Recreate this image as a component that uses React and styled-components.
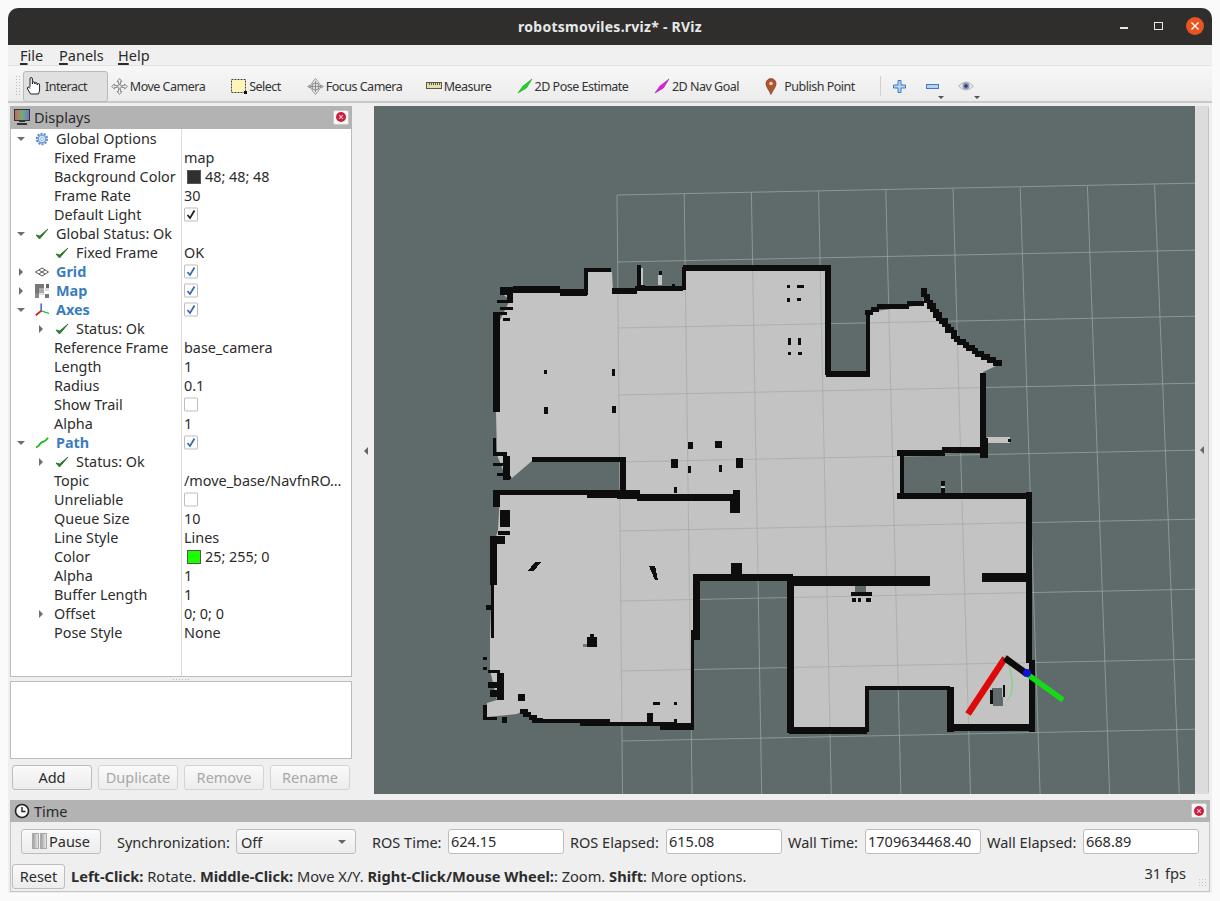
import React from 'react';
import styled, { createGlobalStyle } from 'styled-components';

const Global = createGlobalStyle`
  html, body { margin: 0; padding: 0; background: #fafafa; }
  body { font-family: "Noto Sans", "Open Sans", sans-serif; font-size: 14.4px; color: #2c2c2c; }
  #root { width: 1220px; height: 901px; overflow: hidden; }
`;

const Page = styled.div`
  width: 1220px; height: 901px; padding: 8px 8px 0; box-sizing: border-box; background: #fafafa;
`;
const Win = styled.div`
  width: 1204px; height: 885px; background: #efefef; border-radius: 10px 10px 0 0; overflow: hidden;
  display: flex; flex-direction: column;
`;
const TitleBar = styled.div`
  height: 37px; flex: none; background: #2f2e2d; position: relative; display: flex; align-items: center; justify-content: center;
  color: #e8e8e8; font-weight: 700; font-size: 14px; letter-spacing: .25px; padding-bottom: 1px; box-sizing: border-box;
`;
const WinBtns = styled.div`
  position: absolute; right: 0; top: 0; height: 37px; width: 100px;
`;
const MinIcon = styled.span`
  position: absolute; left: 8px; top: 19px; width: 8px; height: 1.5px; background: #e8e8e8;
`;
const MaxIcon = styled.span`
  position: absolute; left: 42px; top: 14px; width: 7px; height: 6px; border: 1px solid #e8e8e8;
`;
const CloseIcon = styled.span`
  position: absolute; left: 74px; top: 9px; width: 18px; height: 18px; border-radius: 50%; background: #e95420;
  display: flex; align-items: center; justify-content: center;
`;
const MenuBar = styled.div`
  height: 21px; flex: none; display: flex; align-items: center; padding: 0 0 0 12px; font-size: 14.5px; color: #2a2a2a;
  background: #f0f0f0; border-bottom: 1px solid #e2e2e2; box-sizing: border-box;
`;
const MenuItem = styled.span`
  width: ${p => p.$w}px; u { text-decoration-thickness: 1.5px; text-underline-offset: 2px; }
`;
const ToolBar = styled.div`
  height: 37px; flex: none; display: flex; align-items: center; padding: 5px 0 0 7px; box-sizing: border-box;
  background: linear-gradient(#f7f7f7, #ececec); border-bottom: 2px solid #c8c8c8; font-size: 12.5px; letter-spacing: -.5px; color: #333;
`;
const Grip = styled.span`
  width: 6px; height: 22px; margin-right: 2px; flex: none;
  background-image: radial-gradient(#bdbdbd 0.7px, transparent 0.8px); background-size: 3px 3px;
`;
const ToolBtn = styled.div`
  width: ${p => p.$w}px; height: 31px; flex: none; display: flex; align-items: center; justify-content: ${p => p.$left ? 'flex-start' : 'center'}; gap: 2px;
  box-sizing: border-box; white-space: nowrap; border-radius: 3px;
  ${p => p.$active && 'background: #e0e0e0; border: 1px solid #b9b9b9; padding-left: 1px;'}
`;
const PinGap = styled.span` width: 3px; flex: none; `;
const ToolSep = styled.span`
  width: 1px; height: 20px; background: #d0d0d0; flex: none; margin: 0 2px 0 20px;
`;
const IconSlot = styled.div`
  width: 33px; height: 31px; flex: none; display: flex; align-items: center; justify-content: center; position: relative;
`;
const Drop = styled.span`
  position: absolute; right: ${p => p.$r}px; bottom: 3px; width: 0; height: 0; border: 3px solid transparent; border-top: 3px solid #555; border-bottom: 0;
`;
const Main = styled.div`
  height: 693px; flex: none; display: flex; padding: 3px 2px 0 2px; box-sizing: border-box;
`;
const Dock = styled.div`
  width: 342px; flex: none; display: flex; flex-direction: column;
`;
const DockTitle = styled.div`
  height: 23px; flex: none; background: #b3b3b3; display: flex; align-items: center; gap: 4px; padding: 0 3px 1px 4px; font-size: 14.5px; color: #2a2a2a; box-sizing: border-box;
`;
const Spacer = styled.span` flex: 1; `;
const XBtn = styled.span`
  width: 16px; height: 15px; background: #f7f7f7; border-radius: 2px; border: 1px solid #c9c9c9; box-sizing: border-box; display: flex; align-items: center; justify-content: center;
`;
const Tree = styled.div`
  height: 548px; flex: none; background: #fff; border: 1px solid #bcbcbc; border-top: 0; box-sizing: border-box; position: relative;
`;
const ColLine = styled.span`
  position: absolute; left: 170px; top: 0; bottom: 0; width: 1px; background: #dcdcdc;
`;
const Row = styled.div`
  height: 19px; display: flex; align-items: center; position: relative;
`;
const NameCell = styled.div`
  width: 171px; flex: none; height: 19px; display: flex; align-items: center; padding-left: ${p => p.$pad}px; box-sizing: border-box;
  white-space: nowrap; font-weight: ${p => p.$strong ? 700 : 400}; color: ${p => p.$strong ? '#3a7dbf' : '#2c2c2c'};
`;
const ValueCell = styled.div`
  flex: 1; min-width: 0; padding-left: 2px; display: flex; align-items: center; white-space: nowrap; color: #2c2c2c; gap: 4px;
`;
const Arrow = styled.span`
  position: absolute; left: ${p => p.$x}px; top: ${p => p.$open ? 8 : 6}px; width: 0; height: 0; border-style: solid;
  ${p => p.$open
    ? 'border-width: 4px 4px 0 4px; border-color: #6e6e6e transparent transparent transparent;'
    : 'border-width: 4px 0 4px 4px; border-color: transparent transparent transparent #6e6e6e;'}
`;
const RowIcon = styled.span`
  width: 14px; height: 14px; display: inline-flex; margin-right: ${p => p.$gap}px; flex: none; align-items: center; justify-content: center;
`;
const Swatch = styled.span`
  width: 12px; height: 12px; background: ${p => p.$c}; border: 1px solid #555; margin-left: 3px; flex: none;
`;
const Check = styled.span`
  width: 12px; height: 12px; background: #fff; border: 1px solid #bdbdbd; border-radius: 1px; display: inline-flex; align-items: center; justify-content: center; flex: none;
  transform: translateY(-0.5px);
`;
const Splitter = styled.div`
  height: 4px; flex: none; display: flex; align-items: center; justify-content: center;
`;
const SplitDots = styled.span`
  width: 18px; height: 1px; background-image: radial-gradient(#b8b8b8 .6px, transparent .7px); background-size: 3px 1px;
`;
const Desc = styled.div`
  height: 78px; flex: none; background: #fff; border: 1px solid #bcbcbc; box-sizing: border-box;
`;
const DockBtns = styled.div`
  height: 25px; flex: none; margin-top: 6px; padding-left: 2px; display: flex; gap: 6px;
`;
const Btn = styled.div`
  width: ${p => p.$w}px; height: 25px; flex: none; box-sizing: border-box; display: flex; align-items: center; justify-content: center; gap: ${p => p.$gap || 0}px;
  border-radius: 3px; border: 1px solid ${p => p.$off ? '#d4d4d4' : '#bdbdbd'}; background: linear-gradient(#fafafa, #ececec); padding-bottom: 1px;
  color: ${p => p.$off ? '#a8a8a8' : '#2c2c2c'}; font-size: 14.5px;
`;
const HSplit = styled.div`
  width: 22px; flex: none; display: flex; align-items: center; justify-content: flex-end; padding-right: 6px; box-sizing: border-box;
`;
const SideArrow = styled.span`
  width: 0; height: 0; border-style: solid; border-width: 4px 4px 4px 0; border-color: transparent #666 transparent transparent;
`;
const Viewport = styled.div`
  width: 821px; height: 688px; flex: none; background: #5e6b6a; overflow: hidden;
  svg { display: block; }
`;
const SideStrip = styled.div`
  width: 14px; height: 688px; flex: none; background: #dcdcdc; border-right: 1px solid #c4c4c4; box-sizing: border-box;
  display: flex; align-items: center; justify-content: center; border-radius: 2px;
`;
const Dots = styled.div`
  height: 4px; flex: none;
`;
const TimePanel = styled.div`
  margin: 0 2px; width: 1200px; height: 92px; flex: none; border: 1px solid #c4c4c4; border-top: 0; box-sizing: border-box;
  display: flex; flex-direction: column; position: relative;
`;
const TimeTitle = styled.div`
  height: 22px; flex: none; background: #b3b3b3; display: flex; align-items: center; gap: 4px; padding: 0 3px 1px 4px; font-size: 14.5px; color: #2a2a2a; margin: 0 -1px; box-sizing: border-box;
`;
const TimeRow = styled.div`
  height: 25px; margin-top: 7px; flex: none; display: flex; align-items: center; padding-left: 10px;
`;
const Lbl = styled.span`
  width: ${p => p.$w}px; flex: none; padding-left: ${p => p.$pad}px; box-sizing: border-box; white-space: nowrap; font-size: 14.5px; color: #2c2c2c;
`;
const Input = styled.div`
  width: 116px; height: 25px; flex: none; background: #fff; border: 1px solid #bdbdbd; border-radius: 3px; box-sizing: border-box; padding-left: 2px; line-height: 22px; font-size: 14.5px; color: #2c2c2c;
`;
const Combo = styled.div`
  width: 120px; height: 25px; flex: none; background: linear-gradient(#fafafa, #ececec); border: 1px solid #bdbdbd; border-radius: 3px; box-sizing: border-box; padding: 0 9px 0 4px; display: flex; align-items: center; justify-content: space-between; font-size: 14.5px;
`;
const ComboArrow = styled.span`
  width: 0; height: 0; border: 4px solid transparent; border-top: 4px solid #666; border-bottom: 0;
`;
const StatusRow = styled.div`
  height: 25px; margin-top: 10px; flex: none; display: flex; align-items: center; padding-left: 1px; font-size: 14.63px; position: relative;
  b { font-weight: 700; }
`;
const StatusText = styled.span` margin: 0 0 2px 6px; white-space: nowrap; `;
const Fps = styled.span`
  position: absolute; right: 23px; top: 0; line-height: 18px;
`;
const ResizeGrip = styled.span`
  position: absolute; right: 1px; bottom: 1px; width: 10px; height: 10px;
  background-image: radial-gradient(#c4c4c4 .7px, transparent .8px); background-size: 3px 3px;
`;

const CheckMark = ({ c }) => (
  <svg width="12" height="12" viewBox="0 0 12 12"><path d="M2.5 6.5 L5 9.5 L9.5 2" fill="none" stroke={c} strokeWidth="1.8" /></svg>
);
const GreenCheck = () => (
  <svg width="14" height="14" viewBox="0 0 14 14"><path d="M1 8 L4.5 12 L13 2 L4.8 9 Z" fill="#2d7a2d" stroke="#2d7a2d" strokeWidth="1" strokeLinejoin="round" /></svg>
);
const RedX = () => (
  <svg width="12" height="12" viewBox="0 0 12 12"><circle cx="6" cy="6" r="5" fill="#c8203c" /><path d="M4.2 4.2 L7.8 7.8 M7.8 4.2 L4.2 7.8" stroke="#f3c4cc" strokeWidth="1.2" /></svg>
);
const Gear = () => (
  <svg width="14" height="14" viewBox="0 0 14 14"><circle cx="7" cy="7" r="5.2" fill="#c9d9ef" stroke="#5f8fcb" strokeWidth="2" strokeDasharray="2 1.2" /><circle cx="7" cy="7" r="3.8" fill="#dbe6f5" stroke="#5f8fcb" strokeWidth=".9" /><circle cx="7" cy="7" r="1.5" fill="#fff" stroke="#5f8fcb" strokeWidth=".6" /></svg>
);
const GridIcon = () => (
  <svg width="14" height="10" viewBox="0 0 14 10"><path d="M7 1 L13.5 5 L7 9 L.5 5 Z M4 3 L10 7 M10 3 L4 7" fill="none" stroke="#555" strokeWidth="1" /></svg>
);
const MapIcon = () => (
  <svg width="16" height="16" viewBox="0 0 16 16" shapeRendering="crispEdges">
    <rect width="16" height="16" fill="#fff" />
    {[[0,0,10,5,'#777'],[0,5,5,5,'#777'],[5,5,5,5,'#aaa'],[13,0,3,5,'#666'],[0,10,5,6,'#888'],[5,10,5,3,'#ddd'],[11,11,5,5,'#777'],[11,5,5,3,'#ddd']].map(([x,y,w,h,f],i)=><rect key={i} x={x} y={y} width={w} height={h} fill={f} />)}
  </svg>
);
const AxesIcon = () => (
  <svg width="16" height="16" viewBox="0 0 16 16"><path d="M7 9 L7 0.5" stroke="#2233cc" strokeWidth="1.4" /><path d="M7 9 L16 12" stroke="#22bb33" strokeWidth="1.4" /><path d="M7 9 L1 14" stroke="#d11818" strokeWidth="2" /></svg>
);
const PathIcon = () => (
  <svg width="16" height="14" viewBox="0 0 16 14"><path d="M1 12 C5 12 5 7 8 6 S11 6 15 1" fill="none" stroke="#1fb81f" strokeWidth="2.2" /></svg>
);
const Monitor = () => (
  <svg width="16" height="16" viewBox="0 0 16 16" shapeRendering="crispEdges">
    <defs><linearGradient id="scr" x1="0" x2="1"><stop offset="0" stopColor="#d06060" /><stop offset=".5" stopColor="#70b070" /><stop offset="1" stopColor="#7070d0" /></linearGradient></defs>
    <rect x=".5" y=".5" width="15" height="11" fill="url(#scr)" stroke="#333" /><rect x="5" y="12" width="6" height="1" fill="#333" /><rect x="3" y="14" width="10" height="1.5" fill="#333" />
  </svg>
);
const Clock = () => (
  <svg width="16" height="16" viewBox="0 0 16 16"><circle cx="8" cy="8" r="6.5" fill="#fafafa" stroke="#222" strokeWidth="1.6" /><path d="M8 4 V8.5 H11.5" fill="none" stroke="#222" strokeWidth="1.4" /></svg>
);
const Hand = () => (
  <svg width="18" height="20" viewBox="0 0 18 20"><path d="M5 11 V3 Q5 1.5 6.2 1.5 Q7.4 1.5 7.4 3 V8 V7 Q7.4 5.8 8.6 5.8 Q9.8 5.8 9.8 7 V8 Q9.8 6.6 11 6.6 Q12.2 6.6 12.2 8 V9 Q12.2 7.6 13.4 7.6 Q14.6 7.6 14.6 9 V13 Q14.6 16 13.4 18 H5.6 L2.5 13 Q2 11.5 3 11 Q4 10.6 5 12.5" fill="#fff" stroke="#222" strokeWidth="1" /></svg>
);
const MoveIcon = () => (
  <svg width="17" height="17" viewBox="0 0 17 17"><g fill="#eee" stroke="#777" strokeWidth=".8"><path d="M8.5 .5 L11 3.5 H9.5 V6 H7.5 V3.5 H6 Z" /><path d="M8.5 16.5 L11 13.5 H9.5 V11 H7.5 V13.5 H6 Z" /><path d="M.5 8.5 L3.5 6 V7.5 H6 V9.5 H3.5 V11 Z" /><path d="M16.5 8.5 L13.5 6 V7.5 H11 V9.5 H13.5 V11 Z" /></g><circle cx="8.5" cy="8.5" r="2" fill="#ddd" stroke="#777" strokeWidth=".7" /></svg>
);
const SelectIcon = () => (
  <svg width="16" height="16" viewBox="0 0 16 16"><rect x=".5" y="1.5" width="14" height="13" fill="#fdf6b8" stroke="#444" strokeWidth="1" strokeDasharray="2 1" /><rect x="13" y="13" width="3" height="3" fill="#111" /></svg>
);
const FocusIcon = () => (
  <svg width="17" height="17" viewBox="0 0 17 17"><path d="M8.5 .5 L11 3.5 L14 8.5 L11 13.5 L8.5 16.5 L6 13.5 L3 8.5 L6 3.5 Z M.5 8.5 L3 7 V10 Z M16.5 8.5 L14 7 V10 Z" fill="#e6e6e6" stroke="#888" strokeWidth=".8" /><circle cx="8.5" cy="8.5" r="3.6" fill="#ddd" stroke="#777" strokeWidth=".8" /><path d="M8.5 3 V14 M3 8.5 H14" stroke="#777" strokeWidth=".7" /></svg>
);
const MeasureIcon = () => (
  <svg width="16" height="8" viewBox="0 0 16 8" shapeRendering="crispEdges"><rect x=".5" y=".5" width="15" height="6" fill="#e5ddb0" stroke="#5a5a44" /><path d="M3 1 V3 M5 1 V3 M7 1 V3 M9 1 V3 M11 1 V3 M13 1 V3" stroke="#5a5a44" /></svg>
);
const Dart = ({ c, d }) => (
  <svg width="16" height="16" viewBox="0 0 16 16"><path d="M1 15 L6 8 L15 1 L9.5 10 Z" fill={c} stroke={d} strokeWidth=".5" /></svg>
);
const PinIcon = () => (
  <svg width="12" height="17" viewBox="0 0 12 17"><path d="M6 16.5 C4 12 1 9 1 5.6 A5 5 0 0 1 11 5.6 C11 9 8 12 6 16.5 Z" fill="#b0562f" stroke="#7c3a20" strokeWidth=".7" /><circle cx="6" cy="5.5" r="1.8" fill="#e8d0c0" /></svg>
);
const Plus = () => (
  <svg width="13" height="13" viewBox="0 0 13 13"><path d="M5 .5 H8 V5 H12.5 V8 H8 V12.5 H5 V8 H.5 V5 H5 Z" fill="#b8d2ee" stroke="#3f7cc0" /></svg>
);
const Minus = () => (
  <svg width="13" height="5" viewBox="0 0 13 5"><rect x=".5" y=".5" width="12" height="4" fill="#b8d2ee" stroke="#3f7cc0" /></svg>
);
const Eye = () => (
  <svg width="16" height="12" viewBox="0 0 16 12"><path d="M.5 6 Q8 -2 15.5 6 Q8 14 .5 6 Z" fill="#e7e7ee" stroke="#aaa" strokeWidth=".8" /><circle cx="8" cy="6" r="3.4" fill="#8d97b8" /><circle cx="8" cy="6" r="1.7" fill="#2c3560" /></svg>
);
const Pause2 = () => (
  <svg width="15" height="16" viewBox="0 0 15 16" shapeRendering="crispEdges"><defs><linearGradient id="pz" x1="0" x2="1"><stop offset="0" stopColor="#999" /><stop offset="1" stopColor="#eee" /></linearGradient></defs><rect x=".5" y=".5" width="6" height="15" fill="url(#pz)" stroke="#aaa" /><rect x="8.5" y=".5" width="6" height="15" fill="url(#pz)" stroke="#aaa" /></svg>
);

const rows = [
  { t: 'Global Options', pad: 24, arrow: [6, 1], icon: <Gear />, ig: 7 },
  { t: 'Fixed Frame', pad: 43, v: 'map' },
  { t: 'Background Color', pad: 43, v: '48; 48; 48', sw: '#303030' },
  { t: 'Frame Rate', pad: 43, v: '30' },
  { t: 'Default Light', pad: 43, chk: '#222' },
  { t: 'Global Status: Ok', pad: 24, arrow: [6, 1], icon: <GreenCheck />, ig: 7 },
  { t: 'Fixed Frame', pad: 44, v: 'OK', icon: <GreenCheck />, ig: 7 },
  { t: 'Grid', pad: 24, arrow: [8, 0], icon: <GridIcon />, ig: 7, strong: 1, chk: '#3a6ea5' },
  { t: 'Map', pad: 24, arrow: [8, 0], icon: <MapIcon />, ig: 7, strong: 1, chk: '#3a6ea5' },
  { t: 'Axes', pad: 24, arrow: [6, 1], icon: <AxesIcon />, ig: 7, strong: 1, chk: '#3a6ea5' },
  { t: 'Status: Ok', pad: 44, arrow: [28, 0], icon: <GreenCheck />, ig: 7 },
  { t: 'Reference Frame', pad: 43, v: 'base_camera' },
  { t: 'Length', pad: 43, v: '1' },
  { t: 'Radius', pad: 43, v: '0.1' },
  { t: 'Show Trail', pad: 43, chk: 'none' },
  { t: 'Alpha', pad: 43, v: '1' },
  { t: 'Path', pad: 24, arrow: [6, 1], icon: <PathIcon />, ig: 7, strong: 1, chk: '#3a6ea5' },
  { t: 'Status: Ok', pad: 44, arrow: [28, 0], icon: <GreenCheck />, ig: 7 },
  { t: 'Topic', pad: 43, v: '/move_base/NavfnRO…' },
  { t: 'Unreliable', pad: 43, chk: 'none' },
  { t: 'Queue Size', pad: 43, v: '10' },
  { t: 'Line Style', pad: 43, v: 'Lines' },
  { t: 'Color', pad: 43, v: '25; 255; 0', sw: '#19ff00' },
  { t: 'Alpha', pad: 43, v: '1' },
  { t: 'Buffer Length', pad: 43, v: '1' },
  { t: 'Offset', pad: 43, v: '0; 0; 0', arrow: [28, 0] },
  { t: 'Pose Style', pad: 43, v: 'None' },
];

const FLOOR = '500,292 585,293 585,272 612,272 613,292 683,288 685,270 827,270 827,375 868,375 868,312 922,305 925,295 937,315 960,343 978,354 998,365 983,372 983,452 902,455 902,496 1028,496 1032,727 950,727 950,688 867,688 867,730 790,730 790,580 695,580 692,725 540,722 525,710 517,714 487,717 487,703 497,700 490,670 490,638 492,575 495,540 498,530 500,493 622,493 622,460 533,460 512,478 503,470 497,455 496,412 500,412 500,320 510,300';

const WALLS = [
  [500,287,13,8],[513,286,47,7],[560,289,27,7],[584,269,4,26],[584,268,27,4],[612,288,25,6],[635,286,48,4.5],[682,267,3.5,23],[637,265,3.5,22],[659,271,3,4],[641,285,4,3],[672,284,3,3],
  [497,300,16,3],[507,293,6,10],[500,307,13,3],[493,312,14,3],[503,318,7,3],[493,313,7,99],[493,438,3,17],[493,452,14,4],[503,456,7,24],[507,476,4,3],[493,463,10,3],[497,473,6,3],
  [532,457,88,4.5],[620,457,6,33],
  [544,370,3,4],[612,369,3,7],[544,407,4,7],[612,406,4,7],[688,442,5,7],[715,441,7,7],[671,459,7,9],[688,466,3,7],[719,465,3,7],[736,458,7,10],
  [493,490,7,17],[493,490,147,5],[587,492,30,6],[637,494,103,7],[617,495,20,4],[733,490,7,20],[674,487,3,6],[730,497,10,16],
  [683,265,77,5.5],[760,265,67,6],[825,265,6,110],[826,371,44,6],[866,310,3.5,63],
  [787,285,3,3],[797,285,7,3],[787,298,3,4],[797,298,4,3],[788,338,3,7],[798,338,3,7],[788,352,3,3],[798,352,4,3],
  [980,373,6,77],[980,438,8,20],[1008,439,3,3],[900,453,3.5,45],[897,493,130,6],[941,481,4,5],[941,488,4,5],
  [982,573,46,9],[790,576,140,10],[693,574,100,7],[787,580,7,153],[789,727,78,7],[865,687,4,45],[865,686,85,4],[947,687,7,45],[948,724,87,7],
  [851,592,21,4],[852,598,4,4],[858,598,3,4],[866,598,5,4],[990,690,3,14],[1003,685,2,12],
  [500,510,10,17],[498,531,12,4],[490,536,7,29],[490,536,15,8],[490,553,7,32],[491,575,3,63],[486,605,6,5],[483,657,4,3],[483,667,4,3],[488,670,12,3],[497,673,7,27],[488,682,14,6],[490,690,7,7],[518,694,7,7],[483,705,4,13],[483,717,14,3],[502,717,5,6],
  [533,719,77,4],[580,722,97,4],[647,713,6,10],[660,723,31,7],[693,577,7,63],[691,630,3,38],[691,660,3,70],[653,702,7,3],[674,702,3,3],[674,719,3,3],[587,637,10,10],[590,634,4,3],[731,563,11,14],
];
const stairs = (pts, w) => {
  const out = [];
  for (let i = 0; i + 1 < pts.length; i++) {
    const [x0, y0] = pts[i]; const [x1, y1] = pts[i + 1];
    const n = Math.ceil(Math.hypot(x1 - x0, y1 - y0) / 3);
    for (let k = 0; k <= n; k++) {
      const x = Math.round((x0 + (x1 - x0) * k / n) / 3) * 3;
      const y = Math.round((y0 + (y1 - y0) * k / n) / 3) * 3;
      out.push([x - w / 2, y - w / 2, w, w]);
    }
  }
  return out;
};
const STAIRS = [
  ...stairs([[866,312],[880,307],[922,303]], 5),
  ...stairs([[924,291],[930,305],[942,320],[960,342],[978,353],[998,363]], 6),
  ...stairs([[900,454],[930,452],[980,450]], 6),
  ...stairs([[1028,496],[1029,593],[1032,730]], 6),
  ...stairs([[522,710],[530,717],[540,721]], 5),
];

const MapScene = () => {
  const v = Array.from({ length: 9 }, (_, k) => [617 + 67.2 * k, 195 - 0.019 * 67.2 * k, 622.5 + 69.6 * k]);
  const h = [195, 262, 328, 395, 462, 531, 601, 671, 741];
  return (
    <svg width="821" height="688" viewBox="374 106 821 688">
      <polygon points={FLOOR} fill="#c3c3c3" />
      <rect x="987" y="437" width="23" height="6" fill="#c3c3c3" />
      <rect x="941" y="485" width="4" height="3" fill="#c3c3c3" />
      <rect x="658" y="275" width="4" height="10" fill="#c3c3c3" />
      <rect x="639" y="268" width="4" height="18" fill="#c3c3c3" />
      {v.map(([x0, y0, x1], i) => <line key={i} x1={x0} y1={y0} x2={x1} y2={794} stroke="#a2a8a8" strokeOpacity=".7" strokeWidth="1" />)}
      {h.map((y, i) => <line key={i} x1={617 + i * 0.6} y1={y} x2={1195} y2={y - 0.0205 * (578 - i * 0.6)} stroke="#a2a8a8" strokeOpacity=".7" strokeWidth="1" />)}
      <g shapeRendering="crispEdges">
        <rect x="855" y="583" width="11" height="9" fill="#5e6b6a" />
        <polygon points="992,688 1002,688 1003,706 993,706" fill="#5e6b6a" />
        {[...WALLS, ...STAIRS].map(([x, y, w, hh], i) => <rect key={i} x={x} y={y} width={w} height={hh} fill="#0d0d0d" />)}
        <polygon points="528,571 534,571 541,562 535,562" fill="#0d0d0d" />
        <polygon points="649,566 655,566 658,580 655,580" fill="#0d0d0d" />
        <rect x="583" y="644" width="4" height="3" fill="#777" />
      </g>
      <path d="M1005 655 Q1009 665 1011 673 Q1015 692 1007 701" fill="none" stroke="#70d870" strokeWidth="1" />
      <line x1="1005" y1="658" x2="968" y2="714" stroke="#dd0a0a" strokeWidth="6.5" />
      <line x1="1005" y1="658" x2="1027" y2="674" stroke="#0a0a0a" strokeWidth="6.5" />
      <line x1="1027" y1="674" x2="1063" y2="700" stroke="#18d818" strokeWidth="5.5" />
      <circle cx="1027" cy="673" r="4" fill="#1010dd" />
    </svg>
  );
};

export default function App() {
  return (
    <Page>
      <Global />
      <Win>
        <TitleBar>
          robotsmoviles.rviz* - RViz
          <WinBtns>
            <MinIcon /><MaxIcon />
            <CloseIcon><svg width="10" height="10" viewBox="0 0 10 10"><path d="M1.5 1.5 L8.5 8.5 M8.5 1.5 L1.5 8.5" stroke="#fff" strokeWidth="1.4" /></svg></CloseIcon>
          </WinBtns>
        </TitleBar>
        <MenuBar>
          <MenuItem $w={39}><u>F</u>ile</MenuItem>
          <MenuItem $w={59}><u>P</u>anels</MenuItem>
          <MenuItem $w={40}><u>H</u>elp</MenuItem>
        </MenuBar>
        <ToolBar>
          <Grip />
          <ToolBtn $active $w={85} $left><Hand />Interact</ToolBtn>
          <ToolBtn $w={100}><MoveIcon />Move Camera</ToolBtn>
          <ToolBtn $w={96}><SelectIcon />Select</ToolBtn>
          <ToolBtn $w={101}><FocusIcon />Focus Camera</ToolBtn>
          <ToolBtn $w={107}><MeasureIcon />Measure</ToolBtn>
          <ToolBtn $w={121}><Dart c="#22d622" d="#1a8a1a" />2D Pose Estimate</ToolBtn>
          <ToolBtn $w={127}><Dart c="#e81ce0" d="#901090" />2D Nav Goal</ToolBtn>
          <ToolBtn $w={100}><PinIcon /><PinGap />Publish Point</ToolBtn>
          <ToolSep />
          <IconSlot><Plus /></IconSlot>
          <IconSlot><Minus /><Drop $r={5} /></IconSlot>
          <IconSlot><Eye /><Drop $r={2} /></IconSlot>
        </ToolBar>
        <Main>
          <Dock>
            <DockTitle><Monitor />Displays<Spacer /><XBtn><RedX /></XBtn></DockTitle>
            <Tree>
              <ColLine />
              {rows.map((r, i) => (
                <Row key={i}>
                  {r.arrow && <Arrow $x={r.arrow[0]} $open={!!r.arrow[1]} />}
                  <NameCell $pad={r.pad} $strong={r.strong}>
                    {r.icon && <RowIcon $gap={r.ig}>{r.icon}</RowIcon>}
                    {r.t}
                  </NameCell>
                  <ValueCell>
                    {r.sw && <Swatch $c={r.sw} />}
                    {r.v}
                    {r.chk && <Check>{r.chk !== 'none' && <CheckMark c={r.chk} />}</Check>}
                  </ValueCell>
                </Row>
              ))}
            </Tree>
            <Splitter><SplitDots /></Splitter>
            <Desc />
            <DockBtns>
              <Btn $w={80}>Add</Btn>
              <Btn $w={80} $off>Duplicate</Btn>
              <Btn $w={80} $off>Remove</Btn>
              <Btn $w={80} $off>Rename</Btn>
            </DockBtns>
          </Dock>
          <HSplit><SideArrow /></HSplit>
          <Viewport><MapScene /></Viewport>
          <SideStrip><SideArrow /></SideStrip>
        </Main>
        <Dots />
        <TimePanel>
          <TimeTitle><Clock />Time<Spacer /><XBtn><RedX /></XBtn></TimeTitle>
          <TimeRow>
            <Btn $w={80} $gap={2}><Pause2 />Pause</Btn>
            <Lbl $w={135} $pad={16}>Synchronization:</Lbl>
            <Combo>Off<ComboArrow /></Combo>
            <Lbl $w={92} $pad={16}>ROS Time:</Lbl>
            <Input>624.15</Input>
            <Lbl $w={102} $pad={6}>ROS Elapsed:</Lbl>
            <Input>615.08</Input>
            <Lbl $w={83} $pad={6}>Wall Time:</Lbl>
            <Input>1709634468.40</Input>
            <Lbl $w={102} $pad={6}>Wall Elapsed:</Lbl>
            <Input>668.89</Input>
          </TimeRow>
          <StatusRow>
            <Btn $w={53}>Reset</Btn>
            <StatusText><b>Left-Click:</b> Rotate. <b>Middle-Click:</b> Move X/Y. <b>Right-Click/Mouse Wheel:</b>: Zoom. <b>Shift</b>: More options.</StatusText>
            <Fps>31 fps</Fps>
            <ResizeGrip />
          </StatusRow>
        </TimePanel>
      </Win>
    </Page>
  );
}
